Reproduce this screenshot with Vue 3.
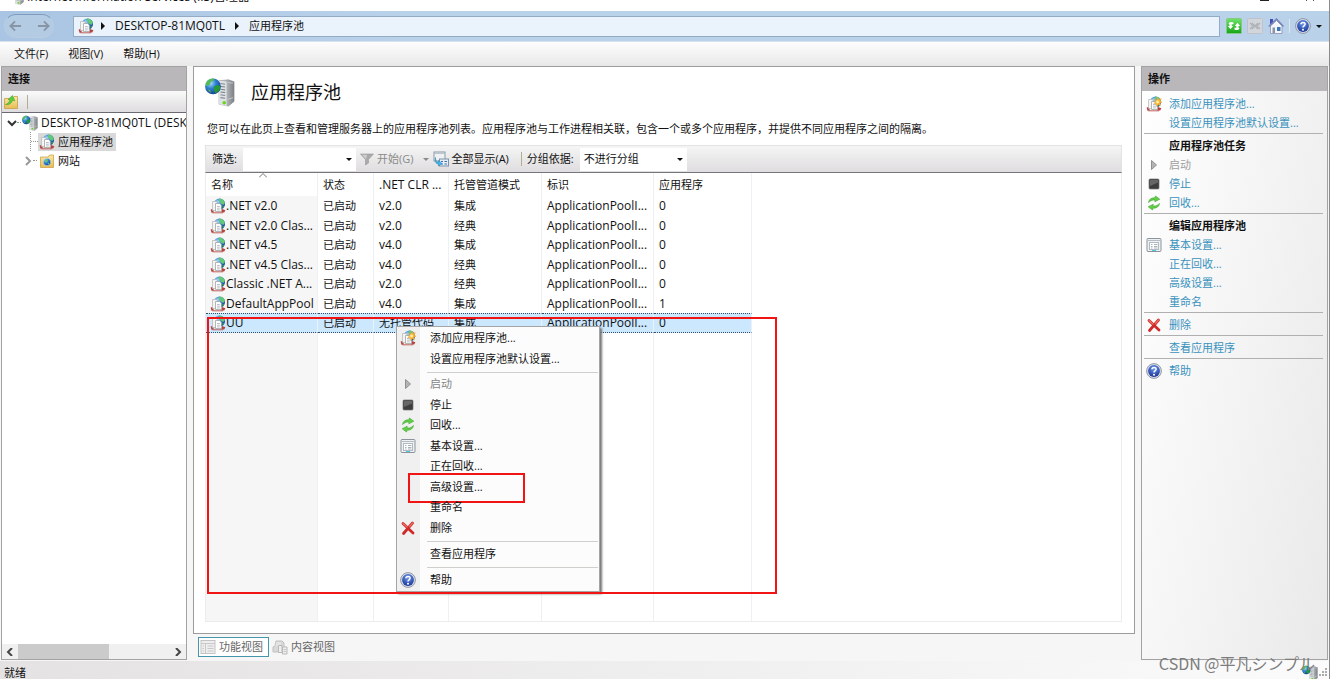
<script setup>
import { ref } from 'vue'

const filter = ref('')
const group = ref('none')
const selected = ref('UU')

const pools = [
  { name: '.NET v2.0', label: '.NET v2.0', clr: 'v2.0', mode: '集成', apps: 0 },
  { name: '.NET v2.0 Classic', label: '.NET v2.0 Clas...', clr: 'v2.0', mode: '经典', apps: 0 },
  { name: '.NET v4.5', label: '.NET v4.5', clr: 'v4.0', mode: '集成', apps: 0 },
  { name: '.NET v4.5 Classic', label: '.NET v4.5 Clas...', clr: 'v4.0', mode: '经典', apps: 0 },
  { name: 'Classic .NET AppPool', label: 'Classic .NET A...', clr: 'v2.0', mode: '经典', apps: 0 },
  { name: 'DefaultAppPool', label: 'DefaultAppPool', clr: 'v4.0', mode: '集成', apps: 1 },
  { name: 'UU', label: 'UU', clr: '无托管代码', mode: '集成', apps: 0 }
]

const contextGroups = [
  [
    { text: '添加应用程序池...', icon: 'pool-new' },
    { text: '设置应用程序池默认设置...' }
  ],
  [
    { text: '启动', icon: 'play', disabled: true },
    { text: '停止', icon: 'stop' },
    { text: '回收...', icon: 'recycle' },
    { text: '基本设置...', icon: 'settings' },
    { text: '正在回收...' },
    { text: '高级设置...', marked: true },
    { text: '重命名' },
    { text: '删除', icon: 'delete' }
  ],
  [{ text: '查看应用程序' }],
  [{ text: '帮助', icon: 'help' }]
]

const actionGroups = [
  { items: [{ text: '添加应用程序池...', icon: 'pool-new' }, { text: '设置应用程序池默认设置...' }] },
  {
    title: '应用程序池任务',
    items: [
      { text: '启动', icon: 'play', disabled: true },
      { text: '停止', icon: 'stop' },
      { text: '回收...', icon: 'recycle' }
    ]
  },
  {
    title: '编辑应用程序池',
    items: [
      { text: '基本设置...', icon: 'settings' },
      { text: '正在回收...' },
      { text: '高级设置...' },
      { text: '重命名' }
    ]
  },
  { items: [{ text: '删除', icon: 'delete' }] },
  { items: [{ text: '查看应用程序' }] },
  { items: [{ text: '帮助', icon: 'help' }] }
]
</script>

<template>
  <div class="window">
    <svg class="sprite" aria-hidden="true">
      <defs>
        <radialGradient id="g-globe" cx="0.35" cy="0.3" r="0.75">
          <stop offset="0" stop-color="#a8dcff" />
          <stop offset="0.45" stop-color="#2f7fd0" />
          <stop offset="1" stop-color="#123f8e" />
        </radialGradient>
        <linearGradient id="g-tower" x1="0" x2="1">
          <stop offset="0" stop-color="#e8eaec" />
          <stop offset="1" stop-color="#7c8084" />
        </linearGradient>
        <linearGradient id="g-green" x1="0" y1="0" x2="0" y2="1">
          <stop offset="0" stop-color="#6fe36a" />
          <stop offset="1" stop-color="#16a516" />
        </linearGradient>
        <radialGradient id="g-help" cx="0.5" cy="0.3" r="0.7">
          <stop offset="0" stop-color="#6f9cf0" />
          <stop offset="1" stop-color="#1a3596" />
        </radialGradient>
        <linearGradient id="g-folder" x1="0" y1="0" x2="0" y2="1">
          <stop offset="0" stop-color="#fbe9a2" />
          <stop offset="1" stop-color="#e6bd55" />
        </linearGradient>
      </defs>
      <symbol id="pool" viewBox="0 0 16 16">
        <circle cx="9.500" cy="6" r="5.500" fill="url(#g-globe)" />
        <path d="M9.500 .6c2.600 0 4.800 1.800 5.400 4.400l-1.700 2-2.200-1.400-2.400-3.200z" fill="#63c878" />
        <path d="M12.300 8l2 .3-1.500 2.400z" fill="#3fa24f" />
        <path d="M.6 11.500l3-.8v4H1.500zM12 11l3.400 1.200-1.200 2.400H11z" fill="#b5433e" />
        <path d="M2.500 14.300h10.500v1H2.500z" fill="#c0615c" />
        <path d="M2.500 3.500h4.500v9H2.500z" fill="#f4f4f2" stroke="#b4b5b5" stroke-width=".7" />
        <path d="M5.500 5.500h4.200l1.600 1.600v6.400H5.500z" fill="#fff" stroke="#a2a5a5" stroke-width=".8" />
        <path d="M7 8.500h2.800M7 10.200h2.800M7 11.900h2.800" stroke="#9aa5ae" stroke-width=".7" />
      </symbol>
      <symbol id="pool-new" viewBox="0 0 16 16">
        <use href="#pool" />
        <path d="M11.800 1l1 2.600 2.500-1-1.100 2.500 1.800 1.200-2.200.9.7 2.600-2.400-1.200-1.700 1.800-.3-2.600-2.400-.4 2-1.600-.9-2.300 2.200.5z" fill="#ffb52e" stroke="#e79a3d" stroke-width=".4" />
        <circle cx="11.600" cy="6" r="1.400" fill="#fff1a8" />
      </symbol>
      <symbol id="server" viewBox="0 0 32 32">
        <path d="M15 4l10-1 6 2v21l-6 5-10-2z" fill="url(#g-tower)" stroke="#85898d" stroke-width=".6" />
        <path d="M15 4l8 1v26l-8-2z" fill="#dfe3e6" />
        <path d="M16.500 7l5 .7M16.500 10l5 .7M16.500 13l5 .7M16.500 16l5 .7M16.500 19l5 .7M16.500 22l5 .7" stroke="#7e868d" stroke-width="1.200" />
        <path d="M24 6l6 .5M24 24l6-2" stroke="#c8cbcd" />
        <circle cx="20.500" cy="27.500" r="1.900" fill="#69d51c" />
        <circle cx="8.500" cy="10" r="8.400" fill="url(#g-globe)" />
        <path d="M2 4.600c2-2.400 6-3.400 8-2.800l-1 2.500-2.600.6-1 3-3.500 2L.5 8z" fill="#54bb58" />
        <path d="M9.500 10l4-1.600 3 1.800-1.300 4.200-3.700 3-2-3z" fill="#239a37" />
        <path d="M2.500 13l3 1 .8 3z" fill="#61bf42" />
      </symbol>
      <symbol id="play" viewBox="0 0 16 16">
        <path d="M5.500 3.500l5 4.500-5 4.500z" fill="#b4b4b4" stroke="#8f8f8f" />
      </symbol>
      <symbol id="stop" viewBox="0 0 16 16">
        <rect x="3" y="3" width="10" height="10" rx="1" fill="#3d3d3d" stroke="#777" stroke-width=".7" />
        <path d="M4 4h8v2.500L4 10z" fill="#666" />
      </symbol>
      <symbol id="recycle" viewBox="0 0 16 16">
        <path d="M2.500 7.500C3 4.300 5.500 2.500 8.700 2.900L9.500 1l4.300 3.200-5 2.600.2-1.800C6.500 4.700 4.700 5.500 2.500 7.500z" fill="#62d045" stroke="#3fa534" stroke-width=".6" />
        <path d="M13.500 8.500c-.5 3.200-3 5-6.200 4.600L6.500 15l-4.300-3.200 5-2.600-.2 1.800c2.500.3 4.300-.5 6.500-2.500z" fill="#62d045" stroke="#3fa534" stroke-width=".6" />
      </symbol>
      <symbol id="settings" viewBox="0 0 16 16">
        <rect x="1" y="1.500" width="14" height="13" rx="1" fill="#eef1f3" stroke="#8b949b" />
        <path d="M1.500 3.500h13" stroke="#b5bec5" />
        <rect x="3.500" y="5.500" width="9" height="7" fill="#fff" stroke="#b1bbc3" />
        <path d="M5 7.500h1.500M8 7.500h3.500M5 9.500h1.500M8 9.500h3.500M5 11h1.500M8 11h3.500" stroke="#93a0aa" stroke-width=".8" />
        <path d="M6 13.500h4" stroke="#55c2e8" />
      </symbol>
      <symbol id="delete" viewBox="0 0 16 16">
        <path d="M3 3.500l10 9.500M12.500 3L3.500 13.500" stroke="#cf2a2a" stroke-width="2.800" stroke-linecap="round" />
        <path d="M3 3.500l4 3.500M12.500 3L9.500 6.500" stroke="#ef7063" stroke-width="1.200" stroke-linecap="round" />
      </symbol>
      <symbol id="help" viewBox="0 0 16 16">
        <circle cx="8" cy="8" r="7.400" fill="#d9dde6" stroke="#7e8595" stroke-width=".8" />
        <circle cx="8" cy="8" r="5.900" fill="url(#g-help)" />
        <path d="M5.900 6.300C6 3.800 10.300 3.900 10.100 6.300 10 7.800 8 7.900 8 9.500" fill="none" stroke="#fff" stroke-width="1.500" />
        <circle cx="8" cy="11.700" r="1" fill="#fff" />
      </symbol>
      <symbol id="folder-up" viewBox="0 0 16 16">
        <path d="M1.500 4.500h8l1.500-2h3.500v12h-13z" fill="url(#g-folder)" stroke="#c79e42" stroke-width=".8" />
        <path d="M2.500 10.500c2.200-.6 3.800-2.200 4.500-4.500L5 5.500 9.500 1.500l2.300 5.300-2-.5C8.500 9.500 6 11.200 2.500 10.500z" fill="#5ccb3c" stroke="#3c9c2c" stroke-width=".5" />
      </symbol>
      <symbol id="site" viewBox="0 0 16 16">
        <path d="M1.500 4h7.500l1.500-2H14.500v12.500h-13z" fill="url(#g-folder)" stroke="#cba348" stroke-width=".8" />
        <circle cx="8" cy="9" r="3.800" fill="url(#g-globe)" stroke="#fff" stroke-width=".5" />
        <path d="M6 7l2.500-1 .5 2-2 1.500zM8.500 9.500l2 .5-1 2z" fill="#5fc45d" />
      </symbol>
      <symbol id="funnel" viewBox="0 0 16 16">
        <path d="M1.500 3h13L9.500 8.500V12l-3 2V8.500z" fill="#aaa" stroke="#999" stroke-width=".6" />
        <path d="M3 3.800h5L7 8z" fill="#cfcfcf" />
      </symbol>
      <symbol id="show-all" viewBox="0 0 16 16">
        <rect x="1" y="1" width="11" height="9" fill="#eef2f5" stroke="#8b98a3" />
        <path d="M1.500 2.500h10" stroke="#b9c4cc" />
        <rect x="6.500" y="8" width="9" height="7" fill="#e4edf7" stroke="#7f93a8" />
        <path d="M8 10.500h2M11.500 10.500h2.500M8 13h2M11.500 13h2.500" stroke="#3d72ad" />
        <path d="M2.500 6.500c0 3 1 4.500 3 5v-2L9 12.500 5.500 15v-1.700c-2.500-.3-4-3-3-6.800z" fill="#45b5ea" stroke="#1d7fb5" stroke-width=".5" />
      </symbol>
      <symbol id="features" viewBox="0 0 16 16">
        <rect x="1" y="1.500" width="14" height="13" fill="#eee" stroke="#c4c4c4" />
        <path d="M1 4.500h14M5.500 4.500v10M7.500 7h6M7.500 9.500h6M7.500 12h6M2.500 7h1.500M2.500 9.500h1.500M2.500 12h1.500" stroke="#c9c9c9" />
      </symbol>
      <symbol id="content" viewBox="0 0 16 16">
        <path d="M1 13V8l2-1 1-5h6l2 2v9z" fill="#d9d9d9" stroke="#c0c0c0" />
        <path d="M4 4h5M3.500 6h5" stroke="#eee" />
        <path d="M6.500 6.500H10v7H6.500zM10.500 8H15v7h-4.500z" fill="#f0f0f0" stroke="#b9b9b9" />
        <path d="M11.500 10.500h2.500M11.500 12.500h2.500" stroke="#c4c4c4" />
      </symbol>
      <symbol id="refresh" viewBox="0 0 16 16">
        <rect x=".5" y=".5" width="15" height="15" rx="1" fill="url(#g-green)" stroke="#86c985" />
        <path d="M2.500 5.500C3.500 3.800 5.500 3.500 7.500 4.500v1.800H5.700V8h1.500l-2.700 3.200L1.800 8h1.700V6.500zM13.500 10.500c-1 1.700-3 2-5 1V9.700h1.800V8H8.800l2.700-3.200L14.200 8h-1.700v1.500z" fill="#fff" />
      </symbol>
      <symbol id="halt" viewBox="0 0 16 16">
        <rect x=".5" y=".5" width="15" height="15" rx="1" fill="#d2d6da" stroke="#bcc3ca" />
        <path d="M3 5l3 3-3 3M13 5l-3 3 3 3M5 5l6 6M11 5l-6 6" fill="none" stroke="#abb1b7" stroke-width="1.200" />
      </symbol>
      <symbol id="home" viewBox="0 0 16 16">
        <path d="M2 1h3v5H2z" fill="#4050b8" />
        <path d="M2.500 8L8.500 2.500 14 8v7.500H2.500z" fill="#f4f6fb" stroke="#8793ae" stroke-width=".8" />
        <path d="M.8 8.500L8.500 1l7 7.500" fill="none" stroke="#7685ba" stroke-width="1.500" />
        <path d="M4.500 9.500h2.500V15H4.500z" fill="#8a93a8" />
        <path d="M9 9h3.500v4H9z" fill="#3a76b8" />
      </symbol>
    </svg>

    <header class="titlebar">
      <svg class="icon"><use href="#server" /></svg>
      <span>Internet Information Services (IIS)管理器</span>
      <i class="sys-min"></i><i class="sys-close"></i>
    </header>

    <nav class="navbar">
      <div class="history">
        <button aria-label="后退"><svg viewBox="0 0 14 12"><path d="M13 6H2M6.500 1L1.500 6l5 5" /></svg></button>
        <button aria-label="前进"><svg viewBox="0 0 14 12"><path d="M1 6h11M7.500 1l5 5-5 5" /></svg></button>
      </div>
      <div class="address">
        <svg class="icon"><use href="#pool" /></svg>
        <i class="crumb-arrow"></i>
        <a href="#" class="latin">DESKTOP-81MQ0TL</a>
        <i class="crumb-arrow"></i>
        <a href="#">应用程序池</a>
      </div>
      <div class="navtools">
        <button aria-label="刷新"><svg class="icon"><use href="#refresh" /></svg></button>
        <button aria-label="停止"><svg class="icon"><use href="#halt" /></svg></button>
        <button aria-label="主页"><svg class="icon"><use href="#home" /></svg></button>
        <i class="nav-split"></i>
        <button class="help" aria-label="帮助"><svg class="icon"><use href="#help" /></svg><i class="down"></i></button>
      </div>
    </nav>

    <div class="menubar">
      <button>文件(F)</button>
      <button>视图(V)</button>
      <button>帮助(H)</button>
    </div>

    <main class="body">
      <aside class="panel connections">
        <h2 class="panel-title">连接</h2>
        <div class="panel-tools">
          <button aria-label="连接"><svg class="icon"><use href="#folder-up" /></svg></button>
          <i class="split"></i>
        </div>
        <ul class="tree">
          <li class="root">
            <svg class="chev" viewBox="0 0 10 10"><path d="M1 3l4 4 4-4" /></svg>
            <i class="dots"></i>
            <svg class="icon"><use href="#server" /></svg>
            <span class="latin">DESKTOP-81MQ0TL (DESK</span>
          </li>
          <li class="child">
            <i class="dots stem"></i>
            <span class="node active"><svg class="icon"><use href="#pool" /></svg>应用程序池</span>
          </li>
          <li class="child">
            <svg class="chev closed" viewBox="0 0 10 10"><path d="M3 1l4 4-4 4" /></svg>
            <i class="dots"></i>
            <span class="node"><svg class="icon"><use href="#site" /></svg>网站</span>
          </li>
        </ul>
        <div class="hscroll">
          <button aria-label="向左滚动"><svg viewBox="0 0 8 8"><path d="M6 0L2 4l4 4" /></svg></button>
          <div class="track"><div class="thumb"></div></div>
          <button aria-label="向右滚动"><svg viewBox="0 0 8 8"><path d="M2 0l4 4-4 4" /></svg></button>
        </div>
      </aside>

      <section class="center">
        <div class="page">
          <div class="heading">
            <svg class="icon-big"><use href="#server" /></svg>
            <h1>应用程序池</h1>
          </div>
          <p class="intro">您可以在此页上查看和管理服务器上的应用程序池列表。应用程序池与工作进程相关联，包含一个或多个应用程序，并提供不同应用程序之间的隔离。</p>
          <div class="toolbar">
            <label for="filter">筛选:</label>
            <div class="combo filter-box">
              <input id="filter" v-model="filter" type="text" />
              <i class="down"></i>
            </div>
            <button class="start" disabled><svg class="icon"><use href="#funnel" /></svg>开始(G)<i class="down"></i></button>
            <button class="all"><svg class="icon"><use href="#show-all" /></svg>全部显示(A)</button>
            <i class="split"></i>
            <label for="group">分组依据:</label>
            <div class="combo group-box">
              <select id="group" v-model="group">
                <option value="none">不进行分组</option>
              </select>
              <i class="down"></i>
            </div>
          </div>
          <div class="list">
            <table>
              <colgroup>
                <col class="c-name" /><col class="c-status" /><col class="c-clr" /><col class="c-mode" />
                <col class="c-id" /><col class="c-apps" /><col />
              </colgroup>
              <thead>
                <tr>
                  <th class="sorted">名称<svg viewBox="0 0 8 5"><path d="M0 4.500l4-4 4 4" /></svg></th>
                  <th>状态</th>
                  <th class="latin">.NET CLR ...</th>
                  <th>托管管道模式</th>
                  <th>标识</th>
                  <th>应用程序</th>
                  <th></th>
                </tr>
              </thead>
              <tbody>
                <tr v-for="p in pools" :key="p.name" :class="{ selected: p.name === selected }" @click="selected = p.name">
                  <td class="name latin"><div><svg class="icon"><use href="#pool" /></svg>{{ p.label }}</div></td>
                  <td>已启动</td>
                  <td :class="{ latin: p.clr.startsWith('v') }">{{ p.clr }}</td>
                  <td>{{ p.mode }}</td>
                  <td class="latin">ApplicationPoolI...</td>
                  <td class="latin">{{ p.apps }}</td>
                  <td></td>
                </tr>
                <tr class="rest"><td class="name"></td><td></td><td></td><td></td><td></td><td></td><td></td></tr>
              </tbody>
            </table>
          </div>
        </div>
        <div class="views">
          <button class="current"><svg class="icon"><use href="#features" /></svg>功能视图</button>
          <button><svg class="icon"><use href="#content" /></svg>内容视图</button>
        </div>
      </section>

      <aside class="panel actions">
        <h2 class="panel-title">操作</h2>
        <div class="action-list">
          <div v-for="(g, i) in actionGroups" :key="i" class="action-group">
            <h3 v-if="g.title">{{ g.title }}</h3>
            <a v-for="a in g.items" :key="a.text" href="#" :class="{ disabled: a.disabled }">
              <svg class="icon"><use v-if="a.icon" :href="'#' + a.icon" /></svg>{{ a.text }}
            </a>
          </div>
        </div>
      </aside>
    </main>

    <footer class="status">
      <span>就绪</span>
      <svg class="icon"><use href="#server" /></svg>
      <svg class="grip" viewBox="0 0 9 9"><path d="M7 1h2M4 4h2M7 4h2M1 7h2M4 7h2M7 7h2" /></svg>
    </footer>

    <div class="context-menu" role="menu">
      <div v-for="(g, i) in contextGroups" :key="i" class="menu-group">
        <button v-for="m in g" :key="m.text" role="menuitem" :disabled="m.disabled">
          <svg class="icon"><use v-if="m.icon" :href="'#' + m.icon" /></svg>{{ m.text }}
          <i v-if="m.marked" class="mark"></i>
        </button>
      </div>
    </div>
    <div class="frame"></div>
    <div class="watermark">CSDN @平凡シンプル</div>
  </div>
</template>

<style>
body {
  overflow: hidden;
}
</style>

<style scoped>
* {
  box-sizing: border-box;
}
.window {
  position: relative;
  display: flex;
  flex-direction: column;
  height: 100vh;
  overflow: hidden;
  border-right: 1px solid #8b8b8b;
  background: #f6f6f6;
  color: #111;
  font: 11px/16px "Open Sans", "Noto Sans CJK SC", sans-serif;
}
.sprite {
  position: absolute;
  width: 0;
  height: 0;
}
.latin {
  font-size: 12px;
}
button,
input,
select {
  margin: 0;
  padding: 0;
  border: 0;
  background: none;
  color: inherit;
  font: inherit;
}
a {
  color: inherit;
  text-decoration: none;
}
h1,
h2,
h3,
p,
ul {
  margin: 0;
  padding: 0;
  font-weight: normal;
}
.icon {
  flex: none;
  width: 16px;
  height: 16px;
}
.down {
  flex: none;
  width: 0;
  border: 3px solid transparent;
  border-top-color: currentColor;
  border-bottom: 0;
}

.titlebar {
  flex: none;
  display: flex;
  align-items: flex-end;
  gap: 3px;
  height: 11px;
  padding: 0 15px 6px 8px;
  background: #fff;
  font-size: 12px;
}
.sys-min {
  width: 9px;
  height: 5px;
  margin-left: auto;
  margin-right: 34px;
  border-top: 1px solid #222;
}
.sys-close {
  width: 8px;
  height: 5px;
  background: linear-gradient(90deg, #555 1px, transparent 1px 7px, #555 7px) 0 0 / 100% 1px no-repeat;
}

.navbar {
  flex: none;
  display: flex;
  align-items: center;
  height: 31px;
  padding: 0 7px 0 4px;
  border-bottom: 1px solid #d8e2ec;
  background: linear-gradient(90deg, #a9c5e3, #bad1ea 30%, #bad1ea);
}
.history {
  display: flex;
  align-items: center;
  justify-content: space-between;
  width: 50px;
  height: 24px;
  margin-right: 19px;
  padding: 0 3px 0 4px;
  border: 1px solid #b9cce0;
  border-top-color: #7e9dbf;
  border-radius: 12px;
  background: #b4cbe4;
}
.history button {
  height: 12px;
}
.history svg {
  display: block;
  width: 13px;
  height: 12px;
  fill: none;
  stroke: #8795a5;
  stroke-width: 2;
}
.address {
  flex: 1;
  display: flex;
  align-items: center;
  height: 21px;
  padding-left: 4px;
  border: 1px solid #93abc5;
  background: #eaf2fb;
}
.crumb-arrow {
  width: 0;
  margin: 0 10px 0 7px;
  border: 4px solid transparent;
  border-left-color: #111;
  border-right: 0;
}
.address .latin + .crumb-arrow {
  margin-left: 10px;
}
.navtools {
  display: flex;
  align-items: center;
  gap: 5px;
  padding-left: 6px;
}
.navtools button {
  display: flex;
  align-items: center;
}
.navtools .help {
  gap: 5px;
}
.nav-split {
  width: 1px;
  height: 14px;
  background: #dde6f0;
}

.menubar {
  flex: none;
  display: flex;
  gap: 20px;
  height: 24px;
  padding-left: 14px;
  background: linear-gradient(#fdfdfd, #e9e8e9);
}

.body {
  flex: 1;
  min-height: 0;
  display: grid;
  grid-template-columns: 186px minmax(0, 1fr) 187px;
  column-gap: 6px;
  padding: 0 1px 1px 1px;
}
.panel {
  min-height: 0;
  display: flex;
  flex-direction: column;
  border: 1px solid #a3a3a3;
  background: #fff;
}
.panel-title {
  flex: none;
  height: 24px;
  padding-left: 6px;
  background: #b9b7ba;
  font-size: 11px;
  line-height: 24px;
  font-weight: bold;
}
.panel-tools {
  flex: none;
  display: flex;
  align-items: center;
  gap: 8px;
  height: 22px;
  padding-left: 1px;
  border-bottom: 1px solid #6b6972;
  background: linear-gradient(#fafafa, #dedcde);
}
.panel-tools button {
  height: 16px;
}
.split {
  width: 1px;
  height: 14px;
  background: #b5ad90;
}
.tree {
  flex: 1;
  overflow: hidden;
  list-style: none;
}
.tree li {
  display: flex;
  align-items: center;
  height: 19px;
  white-space: nowrap;
}
.root {
  padding-left: 5px;
}
.root .latin {
  margin-left: 3px;
}
.tree .child {
  padding-left: 21px;
}
.chev {
  flex: none;
  width: 10px;
  height: 10px;
  fill: none;
  stroke: #333;
  stroke-width: 2;
}
.chev.closed {
  stroke: #9a9a9a;
  stroke-width: 2;
}
.dots {
  flex: none;
  width: 4px;
  height: 1px;
  margin-right: 1px;
  border-top: 1px dotted #999;
}
.stem {
  width: 8px;
  height: 19px;
  margin-left: 7px;
  margin-right: 0;
  border-top: 0;
  border-left: 1px dotted #999;
  background: repeating-linear-gradient(90deg, #999 0 1px, transparent 1px 2px) 0 9px / 8px 1px no-repeat;
}
.node {
  display: flex;
  align-items: center;
  gap: 3px;
  height: 18px;
  padding: 0 3px 0 1px;
}
.node.active {
  background: #d9d9d9;
}
.hscroll {
  flex: none;
  display: flex;
  height: 15px;
  background: #f0f0f0;
}
.hscroll button {
  width: 16px;
}
.hscroll svg {
  display: block;
  width: 8px;
  height: 8px;
  margin: auto;
  fill: none;
  stroke: #444;
  stroke-width: 2;
}
.track {
  flex: 1;
}
.thumb {
  width: 60%;
  height: 100%;
  background: #cbcbcb;
}

.center {
  min-width: 0;
  min-height: 0;
  display: flex;
  flex-direction: column;
}
.page {
  flex: 1;
  min-height: 0;
  display: flex;
  flex-direction: column;
  padding: 10px 12px 11px 11px;
  border: 1px solid #9c9c9c;
  background: #fff;
}
.heading {
  display: flex;
  align-items: center;
  gap: 16px;
  height: 30px;
}
.icon-big {
  width: 30px;
  height: 30px;
}
h1 {
  font-size: 18px;
  line-height: 28px;
}
.intro {
  margin: 14px 0 8px 2px;
}
.toolbar {
  flex: none;
  display: flex;
  align-items: center;
  height: 28px;
  padding-left: 6px;
  border: 1px solid #e3e3e3;
  border-bottom-color: #77757c;
  background: linear-gradient(#f5f5f5, #dfdddf);
  white-space: nowrap;
}
.toolbar button {
  display: flex;
  align-items: center;
  gap: 2px;
}
.combo {
  position: relative;
  display: flex;
  align-items: center;
  height: 23px;
  padding-right: 4px;
  background: #fff;
}
.combo input,
.combo select {
  flex: 1;
  min-width: 0;
  height: 23px;
  appearance: none;
  outline: 0;
}
.filter-box {
  width: 113px;
  margin-left: 6px;
}
.group-box {
  width: 107px;
  margin-left: 6px;
  padding-left: 4px;
}
.toolbar .start {
  margin-left: 3px;
  color: #8a8a8a;
}
.start .down {
  margin-left: 8px;
}
.all {
  margin-left: 4px;
}
.toolbar .split {
  margin: 0 5px 0 12px;
}
.list {
  flex: 1;
  min-height: 0;
  border: 1px solid #ececec;
  border-top: 0;
}
table {
  width: 100%;
  height: 100%;
  table-layout: fixed;
  border-collapse: separate;
  border-spacing: 0;
}
.c-name {
  width: 112px;
}
.c-status {
  width: 56px;
}
.c-clr {
  width: 75px;
}
.c-mode {
  width: 93px;
}
.c-id {
  width: 112px;
}
.c-apps {
  width: 98px;
}
th,
td {
  height: 20px;
  padding: 0 0 0 5px;
  overflow: hidden;
  border-right: 1px solid #edf1f5;
  line-height: 18px;
  text-align: left;
  font-weight: normal;
  white-space: nowrap;
}
th:last-child,
td:last-child {
  border-right: 0;
}
th {
  position: relative;
  height: 23px;
}
.sorted svg {
  position: absolute;
  top: 0;
  left: 53px;
  width: 8px;
  height: 5px;
  fill: none;
  stroke: #777;
}
tbody tr:nth-child(even) td {
  height: 19px;
}
td.name {
  padding-left: 4px;
  background: #f6f6f6;
}
.name div {
  display: flex;
  align-items: center;
  height: 18px;
}
.selected td:not(:last-child) {
  height: 18px;
  border-top: 1px dotted #33506b;
  border-bottom: 1px dotted #33506b;
  background: #cce8ff;
  line-height: 16px;
}
.selected .name div {
  height: 16px;
}
tbody .rest:nth-child(even) td {
  height: 100%;
}
.views {
  flex: none;
  display: flex;
  gap: 1px;
  padding: 3px 0 3px 5px;
  color: #666;
}
.views button {
  display: flex;
  align-items: center;
  gap: 3px;
  height: 20px;
  padding: 0 5px 0 1px;
  border: 1px solid transparent;
}
.views .current {
  border-color: #4396ac;
  background: #fff;
}

.actions {
  background: linear-gradient(100deg, #fff, #e9e9e9);
}
.action-list {
  padding: 3px 4px 0 2px;
}
.action-group + .action-group {
  margin-top: 1px;
  padding-top: 2px;
  border-top: 1px solid #b0b0b0;
}
h3 {
  padding-left: 25px;
  font-size: 11px;
  line-height: 19px;
  font-weight: bold;
}
.action-group a {
  display: flex;
  align-items: center;
  gap: 7px;
  height: 19px;
  padding-left: 2px;
  color: #3a92bd;
}
.action-group .disabled {
  color: #a0a0a0;
}

.status {
  flex: none;
  display: flex;
  align-items: center;
  height: 18px;
  padding: 5px 2px 0 4px;
  background: linear-gradient(90deg, #e4e2e3, #fbfbfb);
}
.status .icon {
  margin-left: auto;
}
.grip {
  width: 9px;
  height: 9px;
  stroke: #aaa;
  stroke-width: 2;
}

.context-menu {
  position: absolute;
  left: 396px;
  top: 326px;
  width: 204px;
  padding: 1px 1px 1px 0;
  border: 1px solid #a5a5a5;
  background: linear-gradient(90deg, #f0f0f0 23px, #fcfcfc 23px);
  box-shadow: 2px 2px 2px #777;
}
.menu-group + .menu-group {
  margin-top: 3px;
  padding-top: 2px;
  background: linear-gradient(#cfcfcb, #cfcfcb) 30px 0 / 100% 1px no-repeat;
}
.context-menu button {
  position: relative;
  display: flex;
  align-items: center;
  gap: 14px;
  width: 100%;
  height: 20px;
  padding-left: 3px;
}
.context-menu button:nth-child(even),
.context-menu button:only-child {
  height: 21px;
}
.context-menu button:disabled {
  color: #858585;
}
.mark {
  position: absolute;
  left: 11px;
  top: -3px;
  width: 117px;
  height: 30px;
  border: 2px solid #f01414;
}
.frame {
  position: absolute;
  left: 207px;
  top: 317px;
  width: 570px;
  height: 277px;
  border: 2px solid #f01414;
  pointer-events: none;
}
.watermark {
  position: absolute;
  right: 14px;
  bottom: 4px;
  color: #7d7d7d;
  font-family: "Noto Sans CJK JP", sans-serif;
  font-size: 16px;
  line-height: 24px;
}
</style>
